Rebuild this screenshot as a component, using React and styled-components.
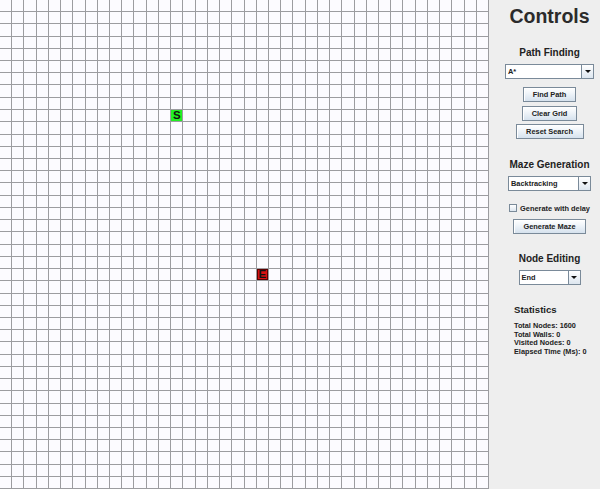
import React from "react";
import styled, { createGlobalStyle } from "styled-components";

const COLS = 40;
const ROWS = 40;
const START = { row: 9, col: 14 };
const END = { row: 22, col: 21 };

const GlobalStyle = createGlobalStyle`
  html, body {
    margin: 0;
    padding: 0;
    background: #eeeeee;
    overflow: hidden;
  }
  body {
    font-family: "Liberation Sans", Arial, sans-serif;
  }
`;

const Frame = styled.div`
  display: flex;
  width: 600px;
  height: 489px;
  overflow: hidden;
`;

const Grid = styled.div`
  display: grid;
  grid-template-columns: repeat(${COLS}, 1fr);
  grid-template-rows: repeat(${ROWS}, 1fr);
  width: 489px;
  height: 489px;
  flex-shrink: 0;
  background: #fcfbff;
`;

const Cell = styled.div`
  box-sizing: border-box;
  border-right: 1px solid #9c9ca0;
  border-bottom: 1px solid #9c9ca0;
  display: flex;
  align-items: center;
  justify-content: center;
  font-family: "Liberation Sans", Arial, sans-serif;
  font-weight: bold;
  font-size: 11.5px;
  line-height: 1;
  color: #111;
  background: ${(p) =>
    p.$kind === "start" ? "#22f022" : p.$kind === "end" ? "#d81212" : "transparent"};
  box-shadow: ${(p) => (p.$kind === "end" ? "inset 0 0 0 1px #5a0000" : "none")};
`;

const Panel = styled.div`
  flex: 1;
  display: flex;
  flex-direction: column;
  align-items: center;
  padding-left: 10px;
  background: #eeeeee;
  color: #222;
  font-weight: bold;
`;

const Title = styled.div`
  margin-top: 6px;
  font-size: 19.5px;
  line-height: 20px;
  color: #2b2b2b;
`;

const Heading = styled.div`
  margin-top: ${(p) => p.$mt}px;
  font-size: 10px;
  line-height: 12px;
  color: #222;
`;

const Combo = styled.div`
  margin-top: ${(p) => p.$mt}px;
  width: ${(p) => p.$w}px;
  height: 15px;
  box-sizing: border-box;
  display: flex;
  border: 1px solid #7a8a99;
  background: #ffffff;
`;

const ComboText = styled.div`
  flex: 1;
  padding-left: 2px;
  font-size: 7.4px;
  line-height: 13px;
  color: #222;
`;

const ComboArrow = styled.div`
  width: 11px;
  border-left: 1px solid #7a8a99;
  background: linear-gradient(#ffffff, #dde6ef);
  display: flex;
  align-items: center;
  justify-content: center;

  &::after {
    content: "";
    border-left: 3px solid transparent;
    border-right: 3px solid transparent;
    border-top: 3px solid #111;
  }
`;

const Button = styled.div`
  margin-top: ${(p) => p.$mt}px;
  width: ${(p) => p.$w}px;
  height: 15px;
  box-sizing: border-box;
  border: 1px solid #7a8a99;
  background: linear-gradient(#ffffff 0%, #f2f6fa 35%, #d6e2ee 100%);
  box-shadow: inset 1px 1px 0 #ffffff;
  display: flex;
  align-items: center;
  justify-content: center;
  font-size: 7.4px;
  color: #222;
`;

const CheckRow = styled.div`
  margin-top: 10.5px;
  height: 13px;
  display: flex;
  align-items: center;
  gap: 3px;
  font-size: 7.4px;
  color: #222;
`;

const CheckBox = styled.div`
  width: 8px;
  height: 8px;
  box-sizing: border-box;
  border: 1px solid #7a8a99;
  background: linear-gradient(#ffffff, #dde6ef);
`;

const Stats = styled.div`
  align-self: flex-start;
  margin-left: 15px;
  display: flex;
  flex-direction: column;
`;

const StatsTitle = styled.div`
  margin-top: 19.5px;
  font-size: 9.6px;
  line-height: 12px;
  color: #222;
`;

const StatsList = styled.div`
  margin-top: 6px;
  display: flex;
  flex-direction: column;
`;

const StatLine = styled.div`
  font-size: 7.3px;
  line-height: 8.7px;
  color: #222;
`;

const cells = Array.from({ length: ROWS * COLS }, (_, i) => {
  const row = Math.floor(i / COLS);
  const col = i % COLS;
  if (row === START.row && col === START.col) return { key: i, kind: "start", label: "S" };
  if (row === END.row && col === END.col) return { key: i, kind: "end", label: "E" };
  return { key: i, kind: "empty", label: "" };
});

export default function App() {
  return (
    <>
      <GlobalStyle />
      <Frame>
        <Grid>
          {cells.map((c) => (
            <Cell key={c.key} $kind={c.kind}>
              {c.label}
            </Cell>
          ))}
        </Grid>
        <Panel>
          <Title>Controls</Title>

          <Heading $mt={21}>Path Finding</Heading>
          <Combo $mt={5} $w={89}>
            <ComboText>A*</ComboText>
            <ComboArrow />
          </Combo>
          <Button $mt={8} $w={53}>Find Path</Button>
          <Button $mt={3.5} $w={55}>Clear Grid</Button>
          <Button $mt={3.5} $w={68}>Reset Search</Button>

          <Heading $mt={19.5}>Maze Generation</Heading>
          <Combo $mt={5.5} $w={83}>
            <ComboText>Backtracking</ComboText>
            <ComboArrow />
          </Combo>
          <CheckRow>
            <CheckBox />
            Generate with delay
          </CheckRow>
          <Button $mt={4} $w={73}>Generate Maze</Button>

          <Heading $mt={19}>Node Editing</Heading>
          <Combo $mt={5} $w={62}>
            <ComboText>End</ComboText>
            <ComboArrow />
          </Combo>

          <Stats>
            <StatsTitle>Statistics</StatsTitle>
            <StatsList>
              <StatLine>Total Nodes: 1600</StatLine>
              <StatLine>Total Walls: 0</StatLine>
              <StatLine>Visited Nodes: 0</StatLine>
              <StatLine>Elapsed Time (Ms): 0</StatLine>
            </StatsList>
          </Stats>
        </Panel>
      </Frame>
    </>
  );
}
